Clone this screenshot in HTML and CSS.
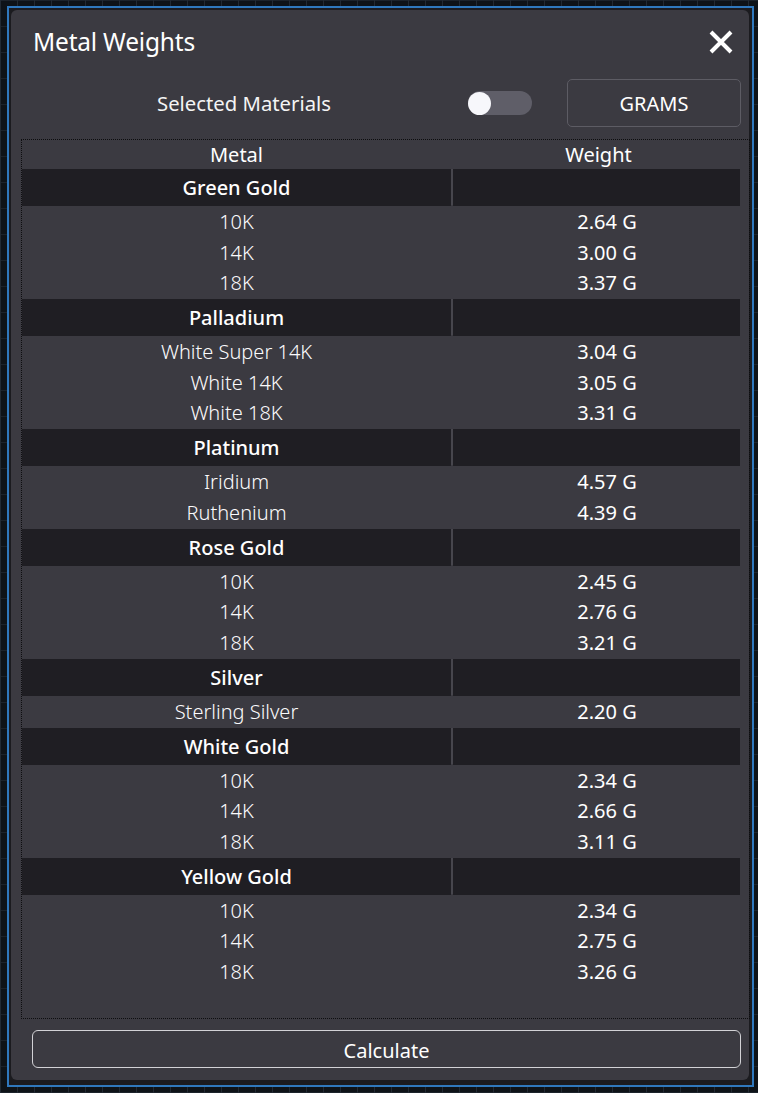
FILE: index.html
```html
<!DOCTYPE html>
<html>
<head>
<meta charset="utf-8">
<link rel="stylesheet" href="styles.css">
</head>
<body>
<div class="window">
  <div class="panel">
    <div class="titlebar">
      <span class="title">Metal Weights</span>
      <svg class="close" width="24" height="24" viewBox="0 0 24 24"><path d="M2 2 L22 22 M22 2 L2 22" stroke="#ffffff" stroke-width="4" stroke-linecap="butt"/></svg>
    </div>
    <div class="controls">
      <span class="label">Selected Materials</span>
      <span class="toggle"><span class="knob"></span></span>
      <button class="unit">GRAMS</button>
    </div>
    <div class="table">
      <div class="row head"><span class="c1">Metal</span><span class="c2">Weight</span></div>

      <div class="row band"><span class="c1">Green Gold</span><span class="c2"></span></div>
      <div class="items">
        <div class="row item"><span class="c1">10K</span><span class="c2">2.64 G</span></div>
        <div class="row item"><span class="c1">14K</span><span class="c2">3.00 G</span></div>
        <div class="row item"><span class="c1">18K</span><span class="c2">3.37 G</span></div>
      </div>

      <div class="row band"><span class="c1">Palladium</span><span class="c2"></span></div>
      <div class="items">
        <div class="row item"><span class="c1">White Super 14K</span><span class="c2">3.04 G</span></div>
        <div class="row item"><span class="c1">White 14K</span><span class="c2">3.05 G</span></div>
        <div class="row item"><span class="c1">White 18K</span><span class="c2">3.31 G</span></div>
      </div>

      <div class="row band"><span class="c1">Platinum</span><span class="c2"></span></div>
      <div class="items">
        <div class="row item"><span class="c1">Iridium</span><span class="c2">4.57 G</span></div>
        <div class="row item"><span class="c1">Ruthenium</span><span class="c2">4.39 G</span></div>
      </div>

      <div class="row band"><span class="c1">Rose Gold</span><span class="c2"></span></div>
      <div class="items">
        <div class="row item"><span class="c1">10K</span><span class="c2">2.45 G</span></div>
        <div class="row item"><span class="c1">14K</span><span class="c2">2.76 G</span></div>
        <div class="row item"><span class="c1">18K</span><span class="c2">3.21 G</span></div>
      </div>

      <div class="row band"><span class="c1">Silver</span><span class="c2"></span></div>
      <div class="items">
        <div class="row item"><span class="c1">Sterling Silver</span><span class="c2">2.20 G</span></div>
      </div>

      <div class="row band"><span class="c1">White Gold</span><span class="c2"></span></div>
      <div class="items">
        <div class="row item"><span class="c1">10K</span><span class="c2">2.34 G</span></div>
        <div class="row item"><span class="c1">14K</span><span class="c2">2.66 G</span></div>
        <div class="row item"><span class="c1">18K</span><span class="c2">3.11 G</span></div>
      </div>

      <div class="row band"><span class="c1">Yellow Gold</span><span class="c2"></span></div>
      <div class="items">
        <div class="row item"><span class="c1">10K</span><span class="c2">2.34 G</span></div>
        <div class="row item"><span class="c1">14K</span><span class="c2">2.75 G</span></div>
        <div class="row item"><span class="c1">18K</span><span class="c2">3.26 G</span></div>
      </div>
    </div>
    <button class="calc">Calculate</button>
  </div>
</div>
</body>
</html>
```

FILE: styles.css
```css
* { box-sizing: border-box; }

html, body {
  margin: 0;
  padding: 0;
}

body {
  width: 758px;
  height: 1093px;
  overflow: hidden;
  background-color: #0e1318;
  background-image:
    repeating-linear-gradient(90deg, #222a33 0 1px, transparent 1px 17px),
    repeating-linear-gradient(0deg, #1c232b 0 1px, transparent 1px 26px);
  font-family: "Noto Sans", "Open Sans", sans-serif;
  color: #f2f2f2;
  padding: 6px 0 0 7px;
}

.window {
  width: 747px;
  height: 1081px;
  border: 2px solid #2f78bd;
  background: #1b1b1f;
  padding: 2px 2px 3px 2px;
}

.panel {
  width: 738px;
  height: 1070px;
  background: #3b3a41;
  border-radius: 6px;
  display: flex;
  flex-direction: column;
}

.titlebar {
  height: 63px;
  display: flex;
  align-items: center;
  justify-content: space-between;
  padding: 0 16px 0 22px;
}

.title {
  font-size: 24.5px;
  color: #ffffff;
  letter-spacing: -0.2px;
}

.close { display: block; }

.controls {
  margin-top: 6px;
  height: 48px;
  display: flex;
  align-items: center;
  padding-left: 11px;
}

.label {
  width: 444px;
  text-align: center;
  font-size: 20.3px;
  color: #f4f4f4;
}

.toggle {
  margin-left: 2px;
  width: 64px;
  height: 24px;
  border-radius: 12px;
  background: #5f5e68;
  display: flex;
  align-items: center;
}

.knob {
  width: 23px;
  height: 23px;
  border-radius: 50%;
  background: #f7f7fb;
}

.unit {
  margin-left: 35px;
  width: 174px;
  height: 48px;
  background: transparent;
  border: 1.5px solid #5d5c64;
  border-radius: 5px;
  color: #ffffff;
  font-family: inherit;
  font-size: 20px;
  padding: 0;
}

.table {
  margin: 12px -1px 0 10px;
  height: 880px;
  border: 1px dotted #0d0d0f;
  padding-right: 9px;
}

.row {
  display: grid;
  grid-template-columns: 429px 287px;
  column-gap: 2px;
  text-align: center;
  font-size: 20px;
}

.row span { display: block; }

.head {
  height: 29px;
  line-height: 30px;
  color: #ffffff;
}

.head .c2 { padding-left: 4px; }

.band {
  height: 36px;
  line-height: 37px;
  background: #47464d;
  color: #ffffff;
  font-weight: 500;
}

.band .c1, .band .c2 { background: #1f1e23; }

.items {
  padding: 1px 0 1.5px;
}

.item {
  height: 30.5px;
  line-height: 32px;
}

.item .c1 {
  font-weight: 300;
  color: #fbfbfd;
}

.item .c2 {
  padding-left: 21px;
  font-weight: 400;
  color: #ffffff;
}

.calc {
  margin: 11px 0 0 21px;
  width: 709px;
  height: 38px;
  background: transparent;
  border: 1.5px solid #d2d2d6;
  border-radius: 6px;
  color: #ffffff;
  font-family: inherit;
  font-size: 20px;
  padding: 2px 0 0;
}
```
